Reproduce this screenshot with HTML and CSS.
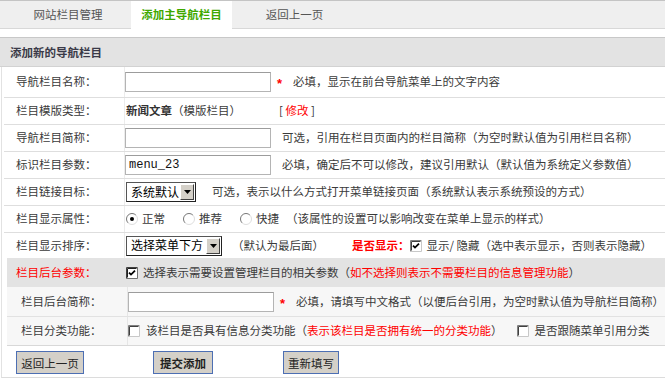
FILE: index.html
```html
<!DOCTYPE html>
<html>
<head>
<meta charset="utf-8">
<meta name="viewport" content="width=device-width, initial-scale=1.0">
<title>添加主导航栏目</title>
<link rel="stylesheet" href="styles.css">
</head>
<body>
<div class="tabs">
	<div class="tab tabOne">网站栏目管理</div>
	<div class="tab tabTwo on">添加主导航栏目</div>
	<div class="tab tabThree">返回上一页</div>
</div>
<div class="head">添加新的导航栏目</div>

<div class="frame">
	<div class="row first">
		<div class="lab">导航栏目名称：</div>
		<div class="val">
			<input class="txt" type="text">
			<span class="star">*</span>
			<span class="tip ml8">必填，显示在前台导航菜单上的文字内容</span>
		</div>
	</div>
	<div class="row">
		<div class="lab">栏目模版类型：</div>
		<div class="val">
			<span class="kind"><b>新闻文章</b>（模版栏目）</span>
			<span class="edit">[ <span class="red">修改</span> ]</span>
		</div>
	</div>
	<div class="row">
		<div class="lab">导航栏目简称：</div>
		<div class="val">
			<input class="txt" type="text">
			<span class="tip ml11">可选，引用在栏目页面内的栏目简称（为空时默认值为引用栏目名称）</span>
		</div>
	</div>
	<div class="row">
		<div class="lab">标识栏目参数：</div>
		<div class="val">
			<input class="txt mono" type="text" value="menu_23">
			<span class="tip ml11">必填，确定后不可以修改，建议引用默认（默认值为系统定义参数值）</span>
		</div>
	</div>
	<div class="row">
		<div class="lab">栏目链接目标：</div>
		<div class="val">
			<span class="sel selShort"><span class="opt">系统默认</span><span class="arr"><svg width="7" height="4" viewBox="0 0 7 4"><path d="M0 0h7L3.5 4z" fill="#000"/></svg></span></span>
			<span class="tip ml16">可选，表示以什么方式打开菜单链接页面（系统默认表示系统预设的方式）</span>
		</div>
	</div>
	<div class="row">
		<div class="lab">栏目显示属性：</div>
		<div class="val">
			<svg class="rd rdOne" width="12" height="12" viewBox="0 0 12 12"><circle cx="6" cy="6" r="5.5" fill="#fff"/><path d="M2.1 9.9A5.5 5.5 0 0 1 9.9 2.1" fill="none" stroke="#777"/><path d="M9.9 2.1A5.5 5.5 0 0 1 2.1 9.9" fill="none" stroke="#ddd"/><circle cx="6" cy="6" r="2" fill="#000"/></svg>
			<span class="rtxt">正常</span>
			<svg class="rd" width="12" height="12" viewBox="0 0 12 12"><circle cx="6" cy="6" r="5.5" fill="#fff"/><path d="M2.1 9.9A5.5 5.5 0 0 1 9.9 2.1" fill="none" stroke="#777"/><path d="M9.9 2.1A5.5 5.5 0 0 1 2.1 9.9" fill="none" stroke="#ddd"/></svg>
			<span class="rtxt">推荐</span>
			<svg class="rd" width="12" height="12" viewBox="0 0 12 12"><circle cx="6" cy="6" r="5.5" fill="#fff"/><path d="M2.1 9.9A5.5 5.5 0 0 1 9.9 2.1" fill="none" stroke="#777"/><path d="M9.9 2.1A5.5 5.5 0 0 1 2.1 9.9" fill="none" stroke="#ddd"/></svg>
			<span class="rtxt">快捷</span>
			<span class="tip ml7">（该属性的设置可以影响改变在菜单上显示的样式）</span>
		</div>
	</div>
	<div class="row last">
		<div class="lab">栏目显示排序：</div>
		<div class="val">
			<span class="sel selLong"><span class="opt">选择菜单下方</span><span class="arr"><svg width="7" height="4" viewBox="0 0 7 4"><path d="M0 0h7L3.5 4z" fill="#000"/></svg></span></span>
			<span class="tip ml10">（默认为最后面）</span>
			<b class="red ml28">是否显示：</b>
			<svg class="cb" width="12" height="12" viewBox="0 0 12 12"><rect x="1" y="1" width="10" height="10" fill="#fff"/><path d="M0.5 11.5V0.5H11.5" fill="none" stroke="#808080"/><path d="M1.5 10.5V1.5H10.5" fill="none" stroke="#404040"/><path d="M0.5 11.5H11.5V0.5" fill="none" stroke="#c8c8c8"/><path d="M3 5.6l2 2 4-4" fill="none" stroke="#000" stroke-width="1.8"/></svg>
			<span class="tip ml5">显示/ 隐藏（选中表示显示，否则表示隐藏）</span>
		</div>
	</div>

	<div class="sub">
		<div class="prow">
			<div class="lab red">栏目后台参数：</div>
			<div class="val">
				<svg class="cb" width="12" height="12" viewBox="0 0 12 12"><rect x="1" y="1" width="10" height="10" fill="#fff"/><path d="M0.5 11.5V0.5H11.5" fill="none" stroke="#404040"/><path d="M1.5 10.5V1.5H10.5" fill="none" stroke="#202020"/><path d="M0.5 11.5H11.5V0.5" fill="none" stroke="#707070"/><path d="M3 5.6l2 2 4-4" fill="none" stroke="#000" stroke-width="1.8"/></svg>
				<span class="tip ml5">选择表示需要设置管理栏目的相关参数（<span class="red">如不选择则表示不需要栏目的信息管理功能</span>）</span>
			</div>
		</div>
		<div class="inner">
			<div class="irow">
				<div class="lab">栏目后台简称：</div>
				<div class="val">
					<input class="txt" type="text">
					<span class="star">*</span>
					<span class="tip ml8">必填，请填写中文格式（以便后台引用，为空时默认值为导航栏目简称）</span>
				</div>
			</div>
			<div class="irow">
				<div class="lab">栏目分类功能：</div>
				<div class="val">
					<svg class="cb" width="12" height="12" viewBox="0 0 12 12"><rect x="1" y="1" width="10" height="10" fill="#fff"/><path d="M0.5 11.5V0.5H11.5" fill="none" stroke="#808080"/><path d="M1.5 10.5V1.5H10.5" fill="none" stroke="#404040"/><path d="M0.5 11.5H11.5V0.5" fill="none" stroke="#c8c8c8"/></svg>
					<span class="tip ml6">该栏目是否具有信息分类功能（<span class="red">表示该栏目是否拥有统一的分类功能</span>）</span>
					<svg class="cb ml14" width="12" height="12" viewBox="0 0 12 12"><rect x="1" y="1" width="10" height="10" fill="#fff"/><path d="M0.5 11.5V0.5H11.5" fill="none" stroke="#808080"/><path d="M1.5 10.5V1.5H10.5" fill="none" stroke="#404040"/><path d="M0.5 11.5H11.5V0.5" fill="none" stroke="#c8c8c8"/></svg>
					<span class="tip ml6">是否跟随菜单引用分类</span>
				</div>
			</div>
		</div>
	</div>

	<div class="btns">
		<button class="btn back">返回上一页</button>
		<button class="btn send">提交添加</button>
		<button class="btn reset">重新填写</button>
	</div>
</div>
</body>
</html>
```

FILE: styles.css
```css
html, body, div, span, b {
	margin: 0;
	padding: 0;
}
body {
	margin: 0;
	background: #fff;
	color: #3a3a3a;
	font-family: "Noto Sans CJK SC", "Noto Sans", sans-serif;
	font-size: 11.5px;
	line-height: 1.2;
}
.red {
	color: #f00;
}

/* tab bar */
.tabs {
	display: flex;
	height: 27px;
	padding-left: 5px;
	background: #efefef;
	border-top: 1px solid #c4c4c4;
	border-bottom: 1px solid #d8d8d8;
}
.tab {
	line-height: 27px;
	text-align: center;
	color: #555;
}
.tabOne {
	width: 126px;
}
.tabTwo {
	width: 101px;
}
.tabThree {
	width: 125px;
}
.tab.on {
	height: 28px;
	background: #fff;
	color: #3fa800;
	font-weight: bold;
}

/* section title */
.head {
	margin-top: 8px;
	height: 28px;
	line-height: 28px;
	padding-left: 10px;
	background: #e3e3e3;
	border-top: 1px solid #c8c8c8;
	border-bottom: 1px solid #d2d2d2;
	font-weight: bold;
	color: #3a3a48;
}

/* form */
.frame {
	margin-left: 1px;
	border-left: 1px solid #e2e2e2;
	border-bottom: 1px solid #dcdcdc;
}
.row {
	display: flex;
	height: 26px;
	margin-left: 2px;
	border-bottom: 1px solid #dedede;
}
.row.first {
	height: 30px;
}
.row.last {
	height: 25px;
	border-bottom: 0;
}
.lab {
	display: flex;
	align-items: center;
	flex: none;
	width: 108px;
	padding-left: 12px;
	border-right: 1px solid #ececec;
}
.val {
	display: flex;
	align-items: center;
	flex: 1;
	white-space: nowrap;
}
.txt {
	width: 146px;
	height: 20px;
	box-sizing: border-box;
	margin: 0;
	padding: 0 3px;
	border: 1px solid #b4b4b4;
	border-top-color: #9c9c9c;
	background: #fff;
	font-size: 12px;
}
.mono {
	font-family: "Liberation Mono", monospace;
	color: #111;
}
.star {
	width: 8px;
	margin-left: 6px;
	padding-top: 4px;
	color: #f00;
	font-family: "Liberation Sans", sans-serif;
	font-size: 13px;
	font-weight: bold;
}
.kind {
	width: 153px;
	margin-left: 1px;
}
.kind b {
	color: #333;
}
.edit {
	color: #333;
}

/* fake select */
.sel {
	display: flex;
	align-items: center;
	height: 20px;
	box-sizing: border-box;
	margin-left: 1px;
	border: 1px solid #222;
	border-top-color: #555;
	border-left-color: #555;
	background: #fff;
	color: #000;
}
.selShort {
	width: 70px;
}
.selLong {
	width: 96px;
}
.opt {
	flex: 1;
	padding-left: 4px;
	font-size: 12px;
}
.arr {
	display: flex;
	align-items: center;
	justify-content: center;
	width: 14px;
	height: 16px;
	margin-right: 1px;
	box-sizing: border-box;
	background: #d4d0c8;
	border: 1px solid;
	border-color: #fff #404040 #404040 #fff;
}

/* radios and checks */
.rd {
	flex: none;
	margin-left: 18px;
}
.rd.rdOne {
	margin-left: 1px;
}
.rtxt {
	margin-left: 4px;
}
.cb {
	flex: none;
}

.ml5 { margin-left: 5px; }
.ml6 { margin-left: 6px; }
.ml7 { margin-left: 7px; }
.ml8 { margin-left: 8px; }
.ml10 { margin-left: 10px; }
.ml11 { margin-left: 11px; }
.ml14 { margin-left: 14px; }
.ml16 { margin-left: 16px; }
.ml28 { margin-left: 28px; }

/* back-office block */
.sub {
	margin-left: 5px;
}
.prow {
	display: flex;
	height: 29px;
	background: #e3e3e3;
}
.prow .lab {
	width: 110px;
	padding-left: 9px;
	border-right: 0;
}
.inner {
	background: #f7f7f7;
	border-bottom: 1px solid #d8d8d8;
}
.irow {
	display: flex;
	height: 29px;
	border-bottom: 1px solid #e2e2e2;
}
.irow + .irow {
	height: 28px;
	border-bottom: 0;
}
.irow .lab {
	width: 106px;
	padding-left: 14px;
	border-right: 1px solid #e6e6e6;
}

/* buttons */
.btns {
	display: flex;
	height: 31px;
	padding-left: 14px;
	align-items: flex-start;
}
.btn {
	height: 23px;
	margin-top: 5px;
	padding: 0;
	background: #d4d0c8;
	border: 1px solid #4d6fb3;
	color: #222;
	font-family: inherit;
	font-size: 11.5px;
}
.back {
	width: 68px;
}
.send {
	width: 60px;
	margin-left: 69px;
	font-weight: bold;
}
.reset {
	width: 56px;
	margin-left: 70px;
}
```
